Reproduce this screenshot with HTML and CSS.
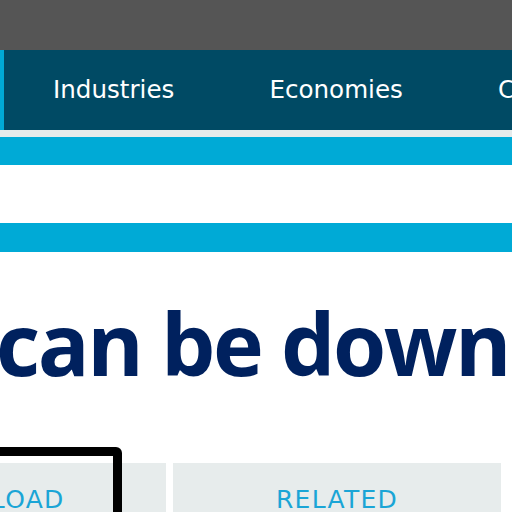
FILE: index.html
```html
<!DOCTYPE html>
<html lang="en">
<head>
<meta charset="utf-8">
<title>Data</title>
<link rel="stylesheet" href="styles.css">
</head>
<body>
<div class="topbar"></div>
<nav class="nav">
  <span class="nav-accent"></span>
  <a class="nav-item" href="#">Industries</a>
  <a class="nav-item" href="#">Economies</a>
  <a class="nav-item" href="#">Countries</a>
</nav>
<div class="divider"></div>
<div class="band"></div>
<div class="gap"></div>
<div class="band band-2"></div>
<main class="content">
  <h1 class="title">can be downloaded</h1>
  <div class="tabs">
    <div class="focus-ring"></div>
    <a class="tab tab-first" href="#">DOWNLOAD</a>
    <a class="tab" href="#">RELATED</a>
  </div>
</main>
</body>
</html>
```
FILE: styles.css
```css
html, body {
  margin: 0;
  padding: 0;
  background: #ffffff;
  overflow: hidden;
}
body {
  width: 512px;
  font-family: "DejaVu Sans", Verdana, sans-serif;
}
.topbar {
  height: 50px;
  background: #555555;
}
.nav {
  height: 80px;
  background: #004a64;
  display: flex;
  align-items: center;
  white-space: nowrap;
}
.nav-accent {
  align-self: stretch;
  width: 4px;
  flex: none;
  background: #00aad6;
  margin-right: 1px;
}
.nav-item {
  flex: none;
  color: #ffffff;
  text-decoration: none;
  font-size: 24.6px;
  padding: 0 47px 0 48px;
  line-height: 30px;
}
.divider {
  height: 7px;
  background: #e6ebeb;
}
.band {
  height: 28px;
  background: #00aad6;
}
.gap {
  height: 58px;
  background: #ffffff;
}
.band-2 {
  height: 29px;
}
.content {
  padding-top: 36px;
}
.title {
  margin: 0 0 0 -4px;
  font-family: "Open Sans", "DejaVu Sans", sans-serif;
  font-weight: 700;
  font-size: 86px;
  line-height: 110px;
  color: #00215e;
  white-space: nowrap;
  letter-spacing: -2.5px;
}
.tabs {
  position: relative;
  display: flex;
  gap: 7px;
  margin-left: -162px;
  margin-top: 51px;
  padding-top: 14px;
}
.tab {
  flex: none;
  width: 328px;
  height: 80px;
  box-sizing: border-box;
  padding-top: 22px;
  background: #e7ecec;
  color: #1aa5d6;
  text-align: center;
  text-decoration: none;
  font-size: 25px;
  letter-spacing: 1.3px;
  line-height: 30px;
}
.tab-first {
  padding-right: 36px;
}
.focus-ring {
  position: absolute;
  top: -2px;
  left: 100px;
  width: 184px;
  height: 120px;
  border: 9px solid #000000;
  border-radius: 6px;
  box-sizing: border-box;
  pointer-events: none;
}
```
